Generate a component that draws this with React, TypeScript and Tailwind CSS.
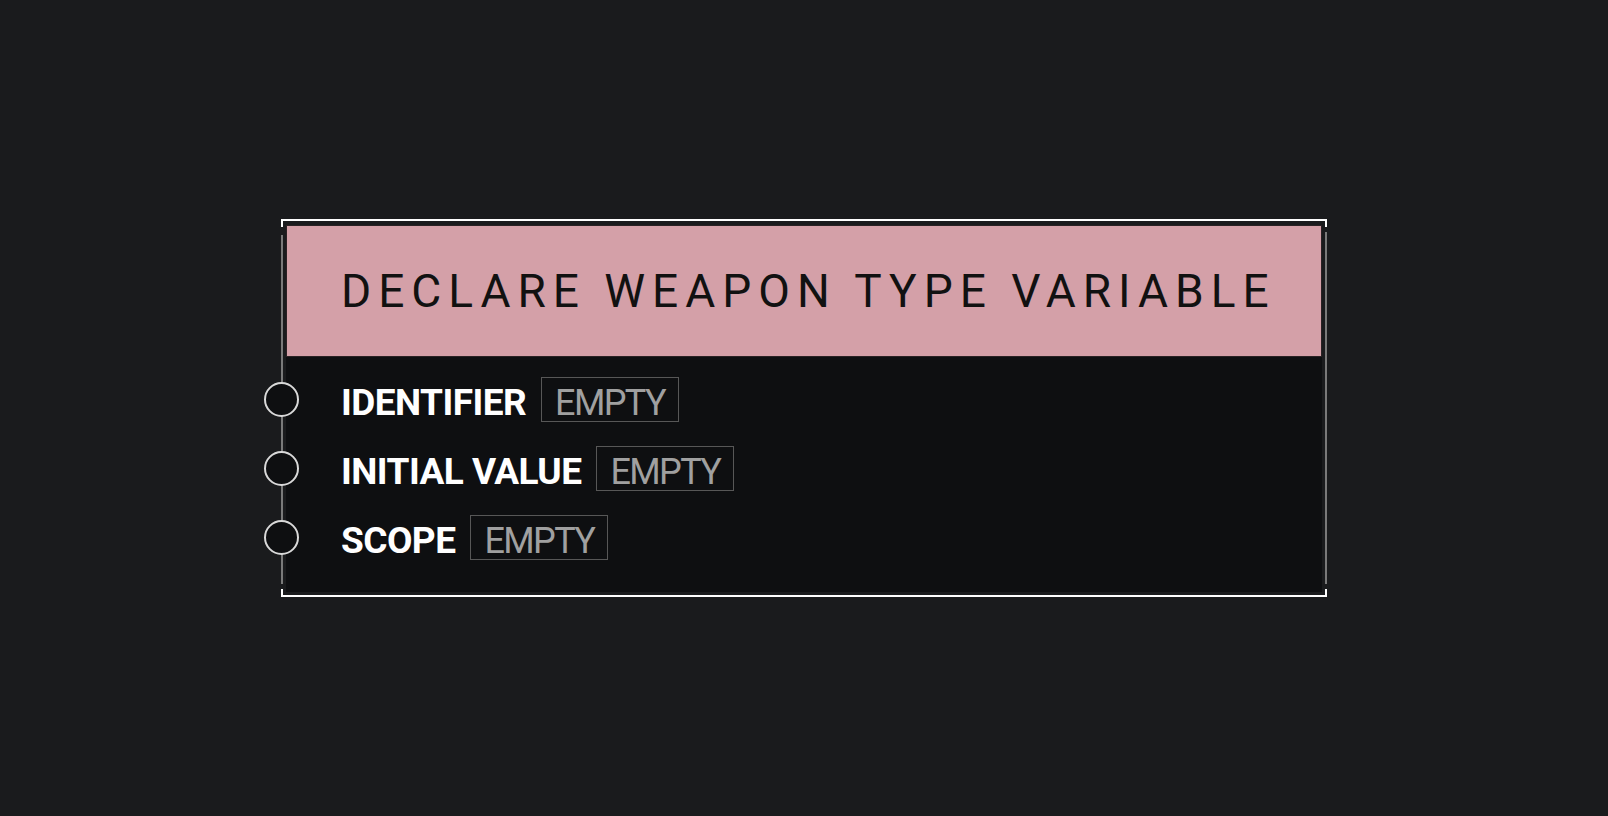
const rows = ['IDENTIFIER', 'INITIAL VALUE', 'SCOPE'];

const PinRow = ({ label }: { label: string }) => (
    <div className="relative flex items-center h-[45px]">
        {/* input pin, sits on the node's side rail */}
        <div className="absolute left-[-77px] top-[5px] w-[35px] h-[35px] rounded-full border-2 border-[#d9d9d9] bg-[#0e0f11]" />
        <span className="mt-[6px] text-[37px] leading-none font-bold text-white tracking-[-0.015em] whitespace-nowrap">{label}</span>
        <div className="ml-[15px] h-[45px] pt-[6px] px-[13px] flex items-center border-[1.5px] border-[#575757] text-[36px] leading-none text-[#a0a0a0] tracking-[-0.045em]">
            EMPTY
        </div>
    </div>
);

export default function App() {
    return (
        <div className="w-full h-screen bg-[#1a1b1d] flex items-center justify-center" style={{ fontFamily: 'Roboto, "Liberation Sans", sans-serif' }}>
            <div className="relative w-[1046px] pt-[6px] pb-[5px] pl-[5px] pr-[5px]">
                {/* corner brackets */}
                <div className="absolute top-0 left-0 right-0 h-[8px] border-t-2 border-x-2 border-white" />
                <div className="absolute bottom-0 left-0 right-0 h-[8px] border-b-2 border-x-2 border-white" />
                {/* side rails */}
                <div className="absolute left-0 top-[16px] bottom-[13px] w-[2px] bg-[#7a7a7a]" />
                <div className="absolute right-0 top-[13px] bottom-[13px] w-[2px] bg-[#7a7a7a]" />

                <div className="bg-[#0e0f11]">
                    <div className="h-[132px] bg-[#d4a0a8] border border-[#2a2224] flex items-center pl-[54px]">
                        <h1 className="text-[46px] leading-none font-normal text-[#111] tracking-[0.152em] whitespace-nowrap">DECLARE WEAPON TYPE VARIABLE</h1>
                    </div>
                    <div className="flex flex-col gap-[24px] pt-[20px] pb-[32px] pl-[55px]">
                        {rows.map(r => <PinRow key={r} label={r} />)}
                    </div>
                </div>
            </div>
        </div>
    );
}
